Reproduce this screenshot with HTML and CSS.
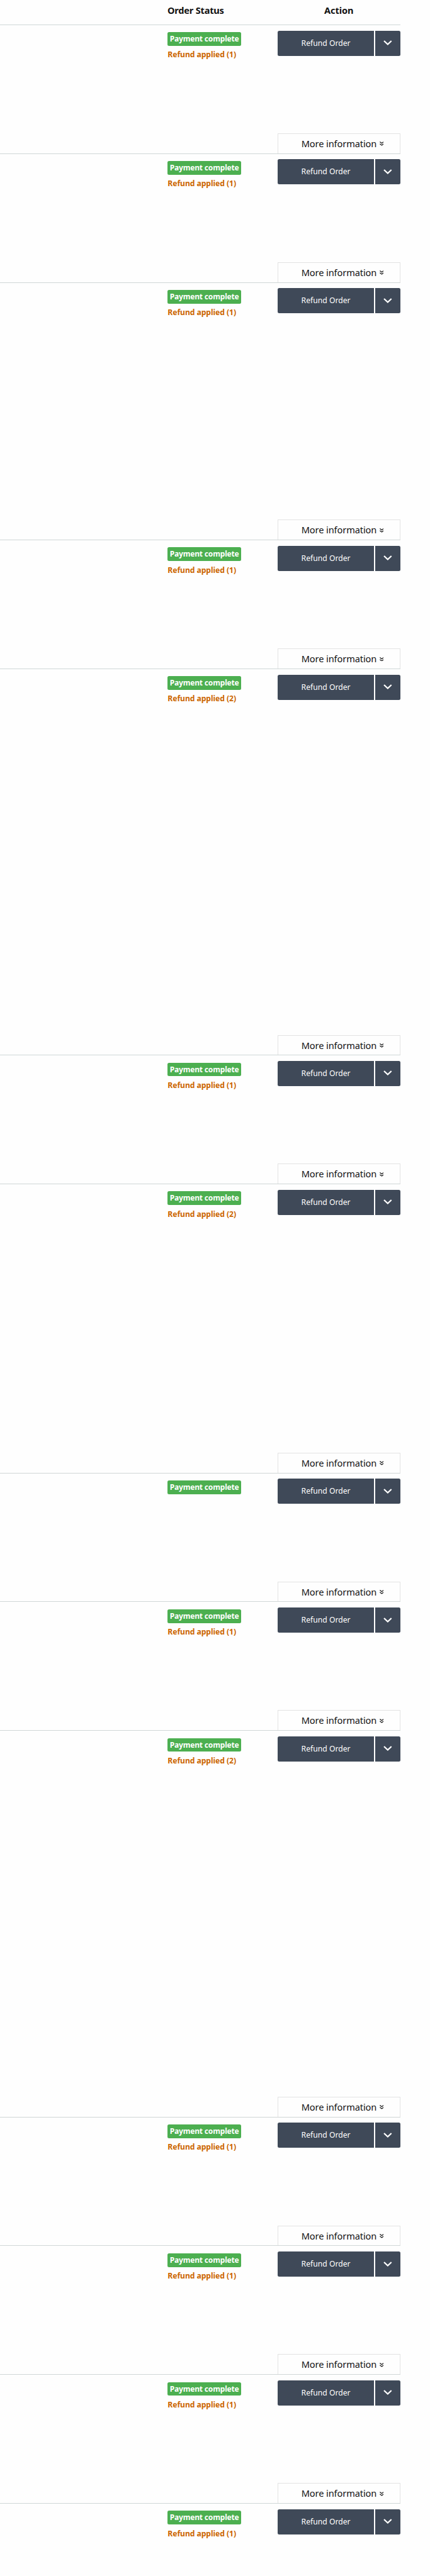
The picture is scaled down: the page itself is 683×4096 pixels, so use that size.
FILE: index.html
```
<!DOCTYPE html>
<html lang="en">
<head>
<meta charset="utf-8">
<title>Orders</title>
<link rel="stylesheet" href="styles.css">
</head>
<body>
<svg class="defs" aria-hidden="true">
  <symbol id="chev" viewBox="0 0 22 13"><path d="M1.6 1.6 11 10.4 20.4 1.6" fill="none" stroke="#fff" stroke-width="3.6"/></symbol>
  <symbol id="more" viewBox="0 0 11 11"><path d="M.6 .8 5.5 4.4 10.4 .8M.6 5.9 5.5 9.5 10.4 5.9" fill="none" stroke="#111" stroke-width="1.9"/></symbol>
</svg>
<main class="orders">
  <header class="head"><div class="head-status">Order Status</div><div class="head-action">Action</div></header>
  <section class="row"><div class="status"><span class="badge">Payment complete</span><span class="refund">Refund applied (1)</span></div><div class="action"><div class="split"><button class="main">Refund Order</button><button class="drop"><svg><use href="#chev"/></svg></button></div><div class="info">More information<svg><use href="#more"/></svg></div></div></section>
  <section class="row"><div class="status"><span class="badge">Payment complete</span><span class="refund">Refund applied (1)</span></div><div class="action"><div class="split"><button class="main">Refund Order</button><button class="drop"><svg><use href="#chev"/></svg></button></div><div class="info">More information<svg><use href="#more"/></svg></div></div></section>
  <section class="row double"><div class="status"><span class="badge">Payment complete</span><span class="refund">Refund applied (1)</span></div><div class="action"><div class="split"><button class="main">Refund Order</button><button class="drop"><svg><use href="#chev"/></svg></button></div><div class="info">More information<svg><use href="#more"/></svg></div></div></section>
  <section class="row"><div class="status"><span class="badge">Payment complete</span><span class="refund">Refund applied (1)</span></div><div class="action"><div class="split"><button class="main">Refund Order</button><button class="drop"><svg><use href="#chev"/></svg></button></div><div class="info">More information<svg><use href="#more"/></svg></div></div></section>
  <section class="row triple"><div class="status"><span class="badge">Payment complete</span><span class="refund">Refund applied (2)</span></div><div class="action"><div class="split"><button class="main">Refund Order</button><button class="drop"><svg><use href="#chev"/></svg></button></div><div class="info">More information<svg><use href="#more"/></svg></div></div></section>
  <section class="row"><div class="status"><span class="badge">Payment complete</span><span class="refund">Refund applied (1)</span></div><div class="action"><div class="split"><button class="main">Refund Order</button><button class="drop"><svg><use href="#chev"/></svg></button></div><div class="info">More information<svg><use href="#more"/></svg></div></div></section>
  <section class="row tall"><div class="status"><span class="badge">Payment complete</span><span class="refund">Refund applied (2)</span></div><div class="action"><div class="split"><button class="main">Refund Order</button><button class="drop"><svg><use href="#chev"/></svg></button></div><div class="info">More information<svg><use href="#more"/></svg></div></div></section>
  <section class="row"><div class="status"><span class="badge">Payment complete</span></div><div class="action"><div class="split"><button class="main">Refund Order</button><button class="drop"><svg><use href="#chev"/></svg></button></div><div class="info">More information<svg><use href="#more"/></svg></div></div></section>
  <section class="row"><div class="status"><span class="badge">Payment complete</span><span class="refund">Refund applied (1)</span></div><div class="action"><div class="split"><button class="main">Refund Order</button><button class="drop"><svg><use href="#chev"/></svg></button></div><div class="info">More information<svg><use href="#more"/></svg></div></div></section>
  <section class="row triple"><div class="status"><span class="badge">Payment complete</span><span class="refund">Refund applied (2)</span></div><div class="action"><div class="split"><button class="main">Refund Order</button><button class="drop"><svg><use href="#chev"/></svg></button></div><div class="info">More information<svg><use href="#more"/></svg></div></div></section>
  <section class="row"><div class="status"><span class="badge">Payment complete</span><span class="refund">Refund applied (1)</span></div><div class="action"><div class="split"><button class="main">Refund Order</button><button class="drop"><svg><use href="#chev"/></svg></button></div><div class="info">More information<svg><use href="#more"/></svg></div></div></section>
  <section class="row"><div class="status"><span class="badge">Payment complete</span><span class="refund">Refund applied (1)</span></div><div class="action"><div class="split"><button class="main">Refund Order</button><button class="drop"><svg><use href="#chev"/></svg></button></div><div class="info">More information<svg><use href="#more"/></svg></div></div></section>
  <section class="row"><div class="status"><span class="badge">Payment complete</span><span class="refund">Refund applied (1)</span></div><div class="action"><div class="split"><button class="main">Refund Order</button><button class="drop"><svg><use href="#chev"/></svg></button></div><div class="info">More information<svg><use href="#more"/></svg></div></div></section>
  <section class="row last"><div class="status"><span class="badge">Payment complete</span><span class="refund">Refund applied (1)</span></div><div class="action"><div class="split"><button class="main">Refund Order</button><button class="drop"><svg><use href="#chev"/></svg></button></div></div></section>
</main>
</body>
</html>
```
FILE: styles.css
```
:root { --u: 0.6244px; }
* { box-sizing: border-box; }
body {
  margin: 0;
  background: #fefefe;
  color: #111;
  font-family: "Noto Sans", "Open Sans", sans-serif;
}
.defs { display: none; }
.orders { width: calc(1018 * var(--u)); height: 4096px; overflow: hidden; }
.head {
  display: flex;
  height: calc(64 * var(--u));
  padding: calc(9 * var(--u)) 0 0 calc(426 * var(--u));
  border-bottom: 1px solid #d0d7d7;
  font-size: 14.6px;
  font-weight: 700;
  line-height: 21px;
  white-space: nowrap;
}
.head-status { width: calc(280 * var(--u)); letter-spacing: -0.22px; }
.head-action { width: calc(312 * var(--u)); text-align: center; letter-spacing: -0.1px; }
.row {
  display: flex;
  height: calc(328 * var(--u));
  padding-left: calc(426 * var(--u));
  border-bottom: 1px solid #d0d7d7;
}
.row.double { height: calc(656 * var(--u)); }
.row.tall { height: calc(736 * var(--u)); }
.row.triple { height: calc(984 * var(--u)); }
.row.last { height: calc(168 * var(--u)); border-bottom: 0; }
.status {
  display: flex;
  flex-direction: column;
  align-items: flex-start;
  width: calc(280 * var(--u));
  padding-top: calc(18 * var(--u));
  font-weight: 700;
  white-space: nowrap;
}
.badge {
  width: calc(188 * var(--u));
  height: calc(35 * var(--u));
  padding-left: calc(6 * var(--u));
  border-radius: 2.5px;
  background: #4caf50;
  color: #fff;
  font-size: 12px;
  line-height: 22px;
  letter-spacing: -0.17px;
}
.refund {
  margin-top: calc(7 * var(--u));
  padding-left: calc(0.5 * var(--u));
  color: #cc6600;
  font-size: 12.2px;
  line-height: 20px;
  letter-spacing: -0.07px;
}
.action {
  display: flex;
  flex-direction: column;
  justify-content: space-between;
  width: calc(312 * var(--u));
  padding-top: calc(14 * var(--u));
}
.split { display: flex; gap: calc(2 * var(--u)); height: calc(64 * var(--u)); }
.main, .drop {
  padding: 0;
  border: 0;
  background: #3f4958;
  color: #fff;
  font: 12.2px/20px "Noto Sans", "Open Sans", sans-serif;
}
.main { width: calc(246 * var(--u)); border-radius: 2.5px 0 0 2.5px; white-space: nowrap; }
.drop {
  display: flex;
  flex: 1;
  justify-content: center;
  border-radius: 0 2.5px 2.5px 0;
}
.drop svg {
  width: calc(22 * var(--u));
  height: calc(13 * var(--u));
  margin-top: calc(24.5 * var(--u));
}
.info {
  display: flex;
  height: calc(51 * var(--u));
  padding-left: calc(59 * var(--u));
  border: 1px solid #e3e3e3;
  border-bottom: 0;
  font-size: 14.6px;
  line-height: 31px;
  letter-spacing: -0.1px;
  white-space: nowrap;
}
.info svg {
  width: calc(11 * var(--u));
  height: calc(11 * var(--u));
  margin: calc(20 * var(--u)) 0 0 calc(7 * var(--u));
}
```
